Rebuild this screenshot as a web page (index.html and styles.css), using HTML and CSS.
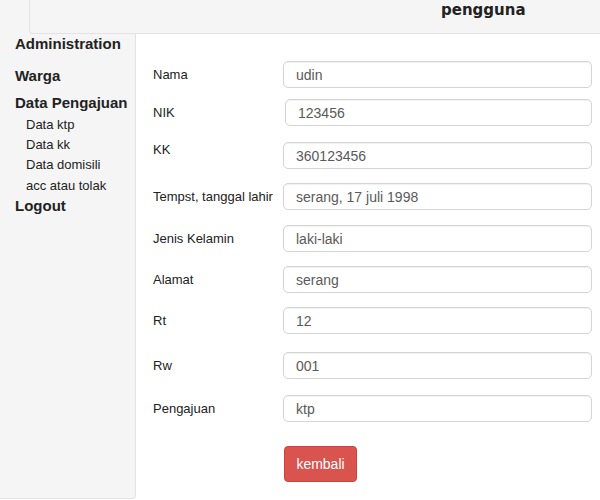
FILE: index.html
```html
<!DOCTYPE html>
<html>
<head>
<meta charset="utf-8">
<link rel="stylesheet" href="styles.css">
</head>
<body>
<div class="topbar">
  <div class="header-well"><span class="user">pengguna</span></div>
</div>
<div class="layout">
  <nav class="sidebar">
    <div class="nav-title">Administration</div>
    <div class="nav-main warga">Warga</div>
    <div class="nav-main pengajuan">Data Pengajuan</div>
    <div class="nav-sub first">Data ktp</div>
    <div class="nav-sub">Data kk</div>
    <div class="nav-sub">Data domisili</div>
    <div class="nav-sub last">acc atau tolak</div>
    <div class="nav-main logout">Logout</div>
  </nav>
  <main class="content">
    <div class="row"><label>Nama</label><input class="field" type="text" value="udin"></div>
    <div class="row"><label>NIK</label><input class="field shift" type="text" value="123456"></div>
    <div class="row"><label class="up">KK</label><input class="field" type="text" value="360123456"></div>
    <div class="row"><label>Tempst, tanggal lahir</label><input class="field" type="text" value="serang, 17 juli 1998"></div>
    <div class="row"><label>Jenis Kelamin</label><input class="field" type="text" value="laki-laki"></div>
    <div class="row"><label>Alamat</label><input class="field" type="text" value="serang"></div>
    <div class="row"><label>Rt</label><input class="field" type="text" value="12"></div>
    <div class="row"><label>Rw</label><input class="field" type="text" value="001"></div>
    <div class="row"><label>Pengajuan</label><input class="field" type="text" value="ktp"></div>
    <div class="actions"><button class="btn-danger" type="button">kembali</button></div>
  </main>
</div>
</body>
</html>
```
FILE: styles.css
```css
* { box-sizing: border-box; }
html, body { margin: 0; padding: 0; }
body {
  width: 600px;
  height: 500px;
  overflow: hidden;
  background: #fff;
  font-family: "Liberation Sans", Arial, sans-serif;
  color: #333;
}
.topbar {
  height: 34px;
  background: #f5f5f5;
  display: flex;
}
.header-well {
  flex: 1;
  margin-left: 29px;
  background: #f5f5f5;
  border-left: 1px solid #e3e3e3;
  border-bottom: 1px solid #e3e3e3;
  border-bottom-left-radius: 4px;
  padding-left: 411px;
  padding-top: 1px;
}
.user {
  font-family: "DejaVu Sans", Verdana, sans-serif;
  font-weight: bold;
  font-size: 15px;
  line-height: 18px;
  color: #222;
}
.layout {
  display: flex;
  align-items: flex-start;
}
.sidebar {
  width: 136px;
  height: 465px;
  background: #f5f5f5;
  border-right: 1px solid #e3e3e3;
  border-bottom: 1px solid #e3e3e3;
  border-bottom-right-radius: 4px;
  padding-left: 15px;
  color: #222;
}
.nav-title, .nav-main {
  font-size: 15px;
  font-weight: bold;
  line-height: 20px;
}
.warga { margin-top: 12px; }
.pengajuan { margin-top: 7px; }
.nav-sub {
  font-size: 13px;
  line-height: 20px;
  padding-left: 11px;
}
.nav-sub.first { margin-top: 2px; }
.nav-sub.last { margin-top: 1px; }
.content {
  flex: 1;
  padding: 27px 8px 0 17px;
}
.row {
  display: flex;
  align-items: center;
  height: 27px;
}
.row + .row { margin-top: 14px; }
.row:nth-child(2) { margin-top: 11px; }
.row:nth-child(3) { margin-top: 16px; }
.row:nth-child(4) { margin-top: 14px; }
.row:nth-child(5) { margin-top: 15px; }
.row:nth-child(6) { margin-top: 14px; }
.row:nth-child(7) { margin-top: 14px; }
.row:nth-child(8) { margin-top: 18px; }
.row:nth-child(9) { margin-top: 16px; }
.row label {
  width: 130px;
  flex: none;
  font-size: 13px;
  white-space: nowrap;
  color: #222;
}
.row label.up { position: relative; top: -6px; }
.field {
  flex: 1;
  min-width: 0;
  height: 27px;
  margin: 0;
  padding: 0 12px;
  border: 1px solid #d4d4d4;
  border-radius: 5px;
  box-shadow: inset 0 1px 1px rgba(0,0,0,.06);
  font-family: "Liberation Sans", Arial, sans-serif;
  font-size: 14px;
  color: #5a5a5a;
  background: #fff;
  outline: none;
}
.field.shift { margin-left: 2px; }
.actions {
  margin-top: 24px;
  padding-left: 131px;
}
.btn-danger {
  width: 73px;
  height: 36px;
  padding: 0;
  background: #d9534f;
  border: 1px solid #d43f3a;
  border-radius: 4px;
  color: #fff;
  font-family: "Liberation Sans", Arial, sans-serif;
  font-size: 14px;
  cursor: pointer;
}
```
